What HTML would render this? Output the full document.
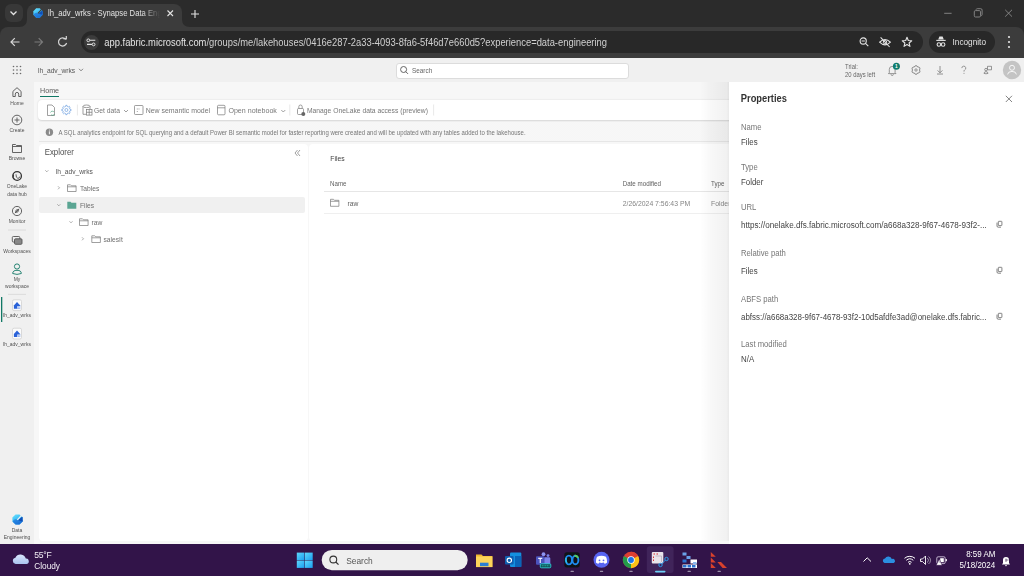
<!DOCTYPE html>
<html><head><meta charset="utf-8">
<style>
*{box-sizing:border-box;margin:0;padding:0}
html,body{width:1024px;height:576px;overflow:hidden;background:#fff;font-family:"Liberation Sans",sans-serif}
.a{position:absolute;white-space:nowrap}
.t{position:absolute;white-space:nowrap;line-height:10px;height:10px;transform:scaleY(1.1);transform-origin:0 55%}
svg{position:absolute;overflow:visible}
#strip{left:0;top:0;width:1024px;height:58px;background:#2b2b2b}
#tab{left:27px;top:4px;width:155px;height:24px;background:#3c3c3c;border-radius:8px 8px 0 0}
#toolbar{left:0;top:27px;width:1024px;height:31px;background:#3c3c3c;border-radius:8px 8px 0 0}
#omni{left:80.5px;top:31px;width:842px;height:22px;background:#282828;border-radius:11px}
#incog{left:929px;top:31px;width:66px;height:22px;background:#282828;border-radius:11px}
#hdr{left:0;top:58px;width:1024px;height:24px;background:#f0f0f0}
#rail{left:0;top:82px;width:34px;height:462px;background:#f0f0f0}
#main{left:34px;top:82px;width:990px;height:462px;background:#f7f7f7}
#taskbar{left:0;top:544px;width:1024px;height:32px;background:#321449}
.rl{font-size:5px;color:#505050;text-align:center;width:34px;left:0;line-height:7px;height:7px}
.card{position:absolute;background:#fff;border-radius:4px}
.tree{font-size:6.7px;color:#6e6e6e}
.plab{font-size:7.7px;color:#767676;left:741px}
.pval{font-size:7.9px;color:#444;left:741px}
</style></head><body>
<!-- browser chrome -->
<div class="a" id="strip"></div>
<div class="a" style="left:4.5px;top:4px;width:18px;height:18.2px;background:#383838;border-radius:6px"></div>
<svg style="left:0;top:0" width="30" height="27"><path d="M10.5 11.5 L13.5 14.5 L16.5 11.5" fill="none" stroke="#e3e3e3" stroke-width="1.3"/></svg>
<div class="a" id="toolbar"></div>
<div class="a" id="tab"></div>
<!-- tab flare -->
<svg style="left:182px;top:19px" width="8" height="8"><path d="M0 0 Q0 8 8 8 L0 8 Z" fill="#3c3c3c"/></svg><svg style="left:19px;top:19px" width="8" height="8"><path d="M8 0 Q8 8 0 8 L8 8 Z" fill="#3c3c3c"/></svg>
<!-- favicon -->
<svg style="left:32.7px;top:7.9px" width="10" height="10" viewBox="0 0 10 10"><defs><linearGradient id="fava" x1="0" y1="0" x2=".6" y2="1"><stop offset="0" stop-color="#6ee6ff"/><stop offset=".55" stop-color="#3cbcf5"/><stop offset="1" stop-color="#2b9de8"/></linearGradient><linearGradient id="favb" x1="0" y1="0" x2="1" y2="1"><stop offset="0" stop-color="#2a8fe6"/><stop offset="1" stop-color="#1768d2"/></linearGradient></defs><path d="M3.2 .35 L6.8 .35 L9.65 3.2 L9.65 6.8 L6.8 9.65 L3.2 9.65 L.35 6.8 L.35 3.2Z" fill="url(#fava)" transform="rotate(0 5 5)"/><path d="M.6 6.5 Q2.5 3.8 5 5.3 Q6.5 6.2 9.6 5.6 L9.65 6.8 L6.8 9.65 L3.2 9.65 L.9 7.3Z" fill="url(#favb)"/><path d="M5.4 5.5 L9.2 2.6 L9.65 3.2 L9.65 6.8 Q7.3 6.6 5.4 5.5Z" fill="#0f4fb8"/><path d="M4.9 5.3 L8.6 1.3" stroke="#3c3c3c" stroke-width="1.1"/></svg>
<div class="t" style="left:48px;top:9.4px;font-size:7.7px;color:#e3e3e3;width:112px;overflow:hidden;-webkit-mask-image:linear-gradient(90deg,#000 84%,transparent)">lh_adv_wrks - Synapse Data Engineering</div>
<svg style="left:0;top:0" width="220" height="27"><path d="M167.5 10.5 L173 16 M173 10.5 L167.5 16" stroke="#e3e3e3" stroke-width="1.1"/><path d="M195 10 V18 M191 14 H199" stroke="#e3e3e3" stroke-width="1.1"/></svg>
<!-- window controls -->
<svg style="left:930px;top:0" width="94" height="27"><path d="M14.2 13.3 H21.6" stroke="#8a8a8a" stroke-width=".9"/><rect x="44.3" y="10.6" width="6.2" height="6.4" rx="1.2" fill="none" stroke="#8a8a8a" stroke-width=".9"/><path d="M46 9.6 a1.4 1.4 0 0 1 1.3 -.9 H50.7 a1.4 1.4 0 0 1 1.4 1.4 V14.5 a1.4 1.4 0 0 1 -.9 1.3" fill="none" stroke="#8a8a8a" stroke-width=".9"/><path d="M75.2 9.8 L82 16.6 M82 9.8 L75.2 16.6" stroke="#8a8a8a" stroke-width=".9"/></svg>
<!-- nav -->
<svg style="left:0;top:27px" width="82" height="31"><path d="M19.5 15 H11 M14.8 11.2 L11 15 L14.8 18.8" fill="none" stroke="#d8d8d8" stroke-width="1.2"/><path d="M34.5 15 H42.5 M38.7 11.2 L42.5 15 L38.7 18.8" fill="none" stroke="#7a7a7a" stroke-width="1.2"/><path d="M65.8 12.3 A4.1 4.1 0 1 0 66.6 16" fill="none" stroke="#d8d8d8" stroke-width="1.2"/><path d="M63.3 11.6 L66.3 11.9 L66.3 8.9" fill="none" stroke="#d8d8d8" stroke-width="1.2"/></svg>
<div class="a" id="omni"></div>
<div class="a" style="left:83.5px;top:34.5px;width:15px;height:15px;border-radius:8px;background:#3c3c3c"></div><svg style="left:76px;top:28px" width="30" height="28"><circle cx="12.3" cy="12.3" r="1.4" fill="none" stroke="#e3e3e3" stroke-width="1"/><path d="M14 12.3 H19.3 M11 16.4 H16" stroke="#e3e3e3" stroke-width="1.1"/><circle cx="17.6" cy="16.4" r="1.4" fill="none" stroke="#e3e3e3" stroke-width="1"/></svg>
<div class="t" style="left:104.3px;top:37.7px;font-size:9.39px;color:#e3e3e3">app.fabric.microsoft.com<span style="color:#d0d0d0">/groups/me/lakehouses/0416e287-2a33-4093-8fa6-5f46d7e660d5?experience=data-engineering</span></div>
<svg style="left:850px;top:31px" width="70" height="22"><circle cx="13.2" cy="10" r="3.1" fill="none" stroke="#e3e3e3" stroke-width="1.1"/><path d="M15.5 12.3 L18.3 15.1 M11.6 10 H14.8" stroke="#e3e3e3" stroke-width="1.1"/><path d="M29.6 11.2 Q35 5.8 40.4 11.2 Q35 16.6 29.6 11.2Z" fill="none" stroke="#e3e3e3" stroke-width="1.1"/><circle cx="35" cy="11.2" r="1.7" fill="none" stroke="#e3e3e3" stroke-width="1"/><path d="M30.6 6.3 L39.6 16" stroke="#e3e3e3" stroke-width="1.1"/><path d="M57.00 6.30 L58.29 9.52 L61.76 9.75 L59.09 11.98 L59.94 15.35 L57.00 13.50 L54.06 15.35 L54.91 11.98 L52.24 9.75 L55.71 9.52Z" fill="none" stroke="#e3e3e3" stroke-width="1.1" stroke-linejoin="round"/></svg>
<div class="a" id="incog"></div>
<svg style="left:929px;top:31px" width="24" height="22"><path d="M9.2 8.6 L10.4 5.6 H13.6 L14.8 8.6Z" fill="#e3e3e3"/><path d="M7.3 9.4 H16.7" stroke="#e3e3e3" stroke-width="1.1"/><circle cx="9.9" cy="13.5" r="1.8" fill="none" stroke="#e3e3e3" stroke-width="1.1"/><circle cx="14.1" cy="13.5" r="1.8" fill="none" stroke="#e3e3e3" stroke-width="1.1"/><path d="M11.6 13.3 H12.4" stroke="#e3e3e3" stroke-width="1"/></svg>
<div class="t" style="left:952.5px;top:37.8px;font-size:8.25px;color:#e3e3e3">Incognito</div>
<svg style="left:1000px;top:31px" width="20" height="22"><circle cx="9" cy="6" r="1.1" fill="#e3e3e3"/><circle cx="9" cy="11" r="1.1" fill="#e3e3e3"/><circle cx="9" cy="16" r="1.1" fill="#e3e3e3"/></svg>

<!-- app header -->
<div class="a" id="hdr"></div>
<svg style="left:0;top:58px" width="34" height="24"><g fill="#6a6a6a"><circle cx="13.5" cy="8.5" r=".8"/><circle cx="17" cy="8.5" r=".8"/><circle cx="20.5" cy="8.5" r=".8"/><circle cx="13.5" cy="12" r=".8"/><circle cx="17" cy="12" r=".8"/><circle cx="20.5" cy="12" r=".8"/><circle cx="13.5" cy="15.5" r=".8"/><circle cx="17" cy="15.5" r=".8"/><circle cx="20.5" cy="15.5" r=".8"/></g></svg>
<div class="t" style="left:38px;top:65.8px;font-size:6.7px;color:#555">lh_adv_wrks</div>
<svg style="left:76px;top:58px" width="10" height="24"><path d="M3 10.8 L5 12.8 L7 10.8" fill="none" stroke="#666" stroke-width=".8"/></svg>
<div class="a" style="left:396px;top:62.5px;width:233px;height:16px;background:#fff;border:1px solid #dcdcdc;border-radius:3px"></div>
<svg style="left:396px;top:62px" width="20" height="17"><circle cx="7.6" cy="7.5" r="3" fill="none" stroke="#555" stroke-width=".9"/><path d="M9.8 9.7 L12 11.9" stroke="#555" stroke-width=".9"/></svg>
<div class="t" style="left:412px;top:65.5px;font-size:6.4px;color:#666">Search</div>
<div class="t" style="left:845px;top:64px;font-size:5.9px;color:#666;line-height:7.6px;height:16px">Trial:<br>20 days left</div>
<svg style="left:880px;top:58px" width="144" height="24">
<path d="M9.3 14.6 V11.3 a2.9 2.9 0 0 1 5.8 0 V14.6 L16 15.6 H8.4 Z M11 16.3 a1.2 1.2 0 0 0 2.4 0" fill="none" stroke="#777" stroke-width=".75" stroke-linejoin="round"/>
<circle cx="16.4" cy="8.2" r="3.5" fill="#107c6c"/><text x="16.4" y="9.9" font-size="4.8" fill="#fff" text-anchor="middle" font-family="Liberation Sans" font-weight="bold">1</text>
<path d="M36.00 7.60 L37.06 8.04 L37.70 9.06 L38.90 9.10 L39.81 9.80 L39.96 10.94 L39.40 12.00 L39.96 13.06 L39.81 14.20 L38.90 14.90 L37.70 14.94 L37.06 15.96 L36.00 16.40 L34.94 15.96 L34.30 14.94 L33.10 14.90 L32.19 14.20 L32.04 13.06 L32.60 12.00 L32.04 10.94 L32.19 9.80 L33.10 9.10 L34.30 9.06 L34.94 8.04Z" fill="none" stroke="#707070" stroke-width=".8" stroke-linejoin="round"/><circle cx="36" cy="12" r="1.2" fill="none" stroke="#707070" stroke-width=".7"/>
<path d="M60 8 V14.8 M57.6 12.4 L60 14.8 L62.4 12.4 M57 16 H63" fill="none" stroke="#777" stroke-width=".8"/>
<path d="M81.8 10.1 a2 2 0 1 1 2.8 1.9 C84 12.3 84 12.8 84 13.6" fill="none" stroke="#777" stroke-width=".75"/><circle cx="84" cy="15.3" r=".5" fill="#777"/>
<path d="M107.5 8.3 h4 v3.5 h-4z" fill="none" stroke="#777" stroke-width=".75"/><circle cx="106" cy="11.6" r="1.3" fill="none" stroke="#777" stroke-width=".75"/><path d="M104 15.4 q0 -1.6 2 -1.8 q2 .2 2 1.8 q-2 .8 -4 0z" fill="none" stroke="#777" stroke-width=".75"/>
<circle cx="132" cy="12" r="9.2" fill="#c4c4c4"/><circle cx="132" cy="9.8" r="2.5" fill="none" stroke="#fff" stroke-width=".85"/><path d="M127.6 16.4 Q128 13.4 132 13.4 Q136 13.4 136.4 16.4" fill="none" stroke="#fff" stroke-width=".85"/></svg>

<!-- left rail -->
<div class="a" id="rail"></div>
<div class="a" id="main"></div>
<svg style="left:0;top:82px" width="34" height="462">
<g fill="none" stroke="#555" stroke-width=".9">
<path d="M12.9 14.5 V9.4 L17 5.7 L21.1 9.4 V14.5 H18.7 V12.1 a1.7 1.7 0 0 0 -3.4 0 V14.5Z" stroke-linejoin="round"/>
<circle cx="17" cy="38" r="4.8"/><path d="M17 35.5 V40.5 M14.5 38 H19.5"/>
<path d="M12.5 62.5 h3 l1 1 h5 v7 h-9z M12.5 64.5 h9"/>
<circle cx="17.1" cy="94" r="4.3" stroke="#333" stroke-width="1.3"/><path d="M13.5 92.5 a4.3 4.3 0 0 0 1.5 5.3" stroke="#333" stroke-width="1"/><path d="M16 92.3 Q15.9 96 17.9 96.4 Q19.4 96.5 19.7 94.6" stroke="#444" stroke-width=".8"/>
<circle cx="17" cy="129" r="4.6"/><path d="M14.8 131.2 L19.2 126.8"/><path d="M15.5 130.5 Q15.2 127.2 18.7 127.3 Q18.8 130.8 15.5 130.5Z"/>
<rect x="12.3" y="154.5" width="7.5" height="5.5" rx="1" fill="#f0f0f0" stroke="#555" stroke-width=".9"/><rect x="14.5" y="156.8" width="7.5" height="5.5" rx="1" fill="#888" stroke="#555" stroke-width=".9"/>

</g>
<g fill="none" stroke="#117865" stroke-width=".9"><circle cx="17" cy="184.5" r="2.6"/><path d="M12.7 191.5 Q12.7 188.3 17 188.3 Q21.3 188.3 21.3 191.5 Q17 193.3 12.7 191.5Z"/></g>
<path d="M8 148 H26 M8 212.4 H26" stroke="#d6d6d6" stroke-width=".8"/>
<rect x="1" y="215" width="1.3" height="25" fill="#117865"/>
<rect x="12.5" y="217.8" width="9" height="10.8" rx="1.6" fill="#fbfbfb" stroke="#cdcdcd" stroke-width=".7"/><path d="M13.9 223.5 L17 220.0 L20.2 223.5 V226.70000000000002 H13.9Z" fill="#2a62d8"/><rect x="17.3" y="224.10000000000002" width="3" height="2.6" fill="#fff"/><path d="M17.8 224.9 h2 M17.8 226.10000000000002 h2" stroke="#3a72e0" stroke-width=".5"/>
<rect x="12.5" y="246.2" width="9" height="10.8" rx="1.6" fill="#fbfbfb" stroke="#cdcdcd" stroke-width=".7"/><path d="M13.9 251.89999999999998 L17 248.39999999999998 L20.2 251.89999999999998 V255.1 H13.9Z" fill="#2a62d8"/><rect x="17.3" y="252.5" width="3" height="2.6" fill="#fff"/><path d="M17.8 253.29999999999998 h2 M17.8 254.5 h2" stroke="#3a72e0" stroke-width=".5"/>

</svg>
<div class="t rl" style="top:99.9px">Home</div>
<div class="t rl" style="top:126.5px">Create</div>
<div class="t rl" style="top:155.4px">Browse</div>
<div class="t rl" style="top:182.9px">OneLake</div>
<div class="t rl" style="top:190.8px">data hub</div>
<div class="t rl" style="top:217.5px">Monitor</div>
<div class="t rl" style="top:247.5px">Workspaces</div>
<div class="t rl" style="top:275.5px">My</div>
<div class="t rl" style="top:282.5px">workspace</div>
<div class="t rl" style="top:311.5px">lh_adv_wrks</div>
<div class="t rl" style="top:340.6px">lh_adv_wrks</div>
<svg style="left:11.7px;top:513.8px" width="11" height="11" viewBox="0 0 10 10"><defs><linearGradient id="dea" x1="0" y1="0" x2=".6" y2="1"><stop offset="0" stop-color="#6ee6ff"/><stop offset=".55" stop-color="#3cbcf5"/><stop offset="1" stop-color="#2b9de8"/></linearGradient><linearGradient id="deb" x1="0" y1="0" x2="1" y2="1"><stop offset="0" stop-color="#2a8fe6"/><stop offset="1" stop-color="#1768d2"/></linearGradient></defs><path d="M3.2 .35 L6.8 .35 L9.65 3.2 L9.65 6.8 L6.8 9.65 L3.2 9.65 L.35 6.8 L.35 3.2Z" fill="url(#dea)" transform="rotate(0 5 5)"/><path d="M.6 6.5 Q2.5 3.8 5 5.3 Q6.5 6.2 9.6 5.6 L9.65 6.8 L6.8 9.65 L3.2 9.65 L.9 7.3Z" fill="url(#deb)"/><path d="M5.4 5.5 L9.2 2.6 L9.65 3.2 L9.65 6.8 Q7.3 6.6 5.4 5.5Z" fill="#0f4fb8"/><path d="M4.9 5.3 L8.6 1.3" stroke="#f0f0f0" stroke-width="1.1"/></svg>
<div class="t rl" style="top:526.5px">Data</div>
<div class="t rl" style="top:533.5px">Engineering</div>

<!-- ribbon -->
<div class="t" style="left:40px;top:85.5px;font-size:7.16px;color:#5a5a5a">Home</div>
<div class="a" style="left:40px;top:95.6px;width:19px;height:1.2px;background:#117865"></div>
<div class="card" style="left:38px;top:100px;width:720px;height:20px;box-shadow:0 .5px 2px rgba(0,0,0,.14)"></div>
<svg style="left:38px;top:100px" width="400" height="20">
<g fill="none" stroke="#777" stroke-width=".7"><path d="M9.5 5 h4.5 l2.5 2.5 v8 h-7z"/></g>
<path d="M12.5 12.5 a2 2 0 0 1 3.5 -.5 M16.5 14 a2 2 0 0 1 -3.5 .5" fill="none" stroke="#3c9c74" stroke-width=".6"/>
<path d="M31.91 9.21 L33.06 9.39 L33.06 10.61 L31.91 10.79 L31.44 11.93 L32.13 12.86 L31.26 13.73 L30.33 13.04 L29.19 13.51 L29.01 14.66 L27.79 14.66 L27.61 13.51 L26.47 13.04 L25.54 13.73 L24.67 12.86 L25.36 11.93 L24.89 10.79 L23.74 10.61 L23.74 9.39 L24.89 9.21 L25.36 8.07 L24.67 7.14 L25.54 6.27 L26.47 6.96 L27.61 6.49 L27.79 5.34 L29.01 5.34 L29.19 6.49 L30.33 6.96 L31.26 6.27 L32.13 7.14 L31.44 8.07Z" fill="none" stroke="#6a9de0" stroke-width=".7" stroke-linejoin="round"/><circle cx="28.4" cy="10" r="1.5" fill="none" stroke="#6a9de0" stroke-width=".7"/>
<path d="M39.4 4.5 V15.5" stroke="#e0e0e0" stroke-width=".7"/>
<g fill="none" stroke="#777" stroke-width=".7"><ellipse cx="48.5" cy="6.3" rx="3.5" ry="1.3"/><path d="M45 6.3 v8 h3 M52 6.3 v3"/><rect x="48.5" y="9.6" width="5.5" height="5.5"/><path d="M48.5 12.3 h5.5 M51.2 9.6 v5.5"/>
<path d="M86 10 l2 2 l2 -2"/>
<rect x="96.5" y="5.5" width="8.5" height="9" rx=".8"/><path d="M99.3 8.5 v1 M101 8.5 v1 M99.3 11 v1"/>
<rect x="179.5" y="5.3" width="7.5" height="9.5" rx="1"/><path d="M179.5 7.8 h7.5"/>
<path d="M243.3 10 l2 2 l2 -2"/>
<path d="M251.8 4.5 V15.5" stroke="#e0e0e0"/>
<rect x="259.5" y="8.5" width="6" height="6" rx="1"/><path d="M260.8 8.5 v-1.8 a1.7 1.7 0 0 1 3.4 0 v1.8"/>
<path d="M395.6 4.5 V15.5" stroke="#e0e0e0"/>
</g>
<circle cx="265.3" cy="14" r="2" fill="#666"/>
</svg>
<div class="t" style="left:94px;top:105.5px;font-size:6.78px;color:#777">Get data</div>
<div class="t" style="left:145.7px;top:105.5px;font-size:6.95px;color:#777">New semantic model</div>
<div class="t" style="left:228.4px;top:105.5px;font-size:7.1px;color:#777">Open notebook</div>
<div class="t" style="left:307px;top:105.5px;font-size:6.74px;color:#777">Manage OneLake data access (preview)</div>
<!-- info bar -->
<div class="a" style="left:38.5px;top:122.3px;width:700px;height:19.3px;background-color:#f9f9f9;background-image:radial-gradient(circle at 1px 1px,#f1f1f1 .5px,transparent .8px);background-size:2px 2px;border-bottom:1px solid #e6e6e6;border-radius:3px 3px 0 0"></div>
<svg style="left:38px;top:121px" width="20" height="20"><circle cx="11.4" cy="11.3" r="3.7" fill="#8a8a8a"/><path d="M11.4 10.3 v3" stroke="#fff" stroke-width=".9"/><circle cx="11.4" cy="9.1" r=".5" fill="#fff"/></svg>
<div class="t" style="left:58.4px;top:127.5px;font-size:6.01px;color:#767676">A SQL analytics endpoint for SQL querying and a default Power BI semantic model for faster reporting were created and will be updated with any tables added to the lakehouse.</div>

<!-- explorer card -->
<div class="card" style="left:38.5px;top:143.5px;width:269.5px;height:397.5px"></div>
<div class="t" style="left:44.7px;top:147.5px;font-size:7.84px;color:#505050">Explorer</div>
<svg style="left:290px;top:146px" width="14" height="14"><path d="M7.5 4 L5 7 L7.5 10 M10 4 L7.5 7 L10 10" fill="none" stroke="#777" stroke-width=".7"/></svg>
<div class="a" style="left:38.5px;top:197px;width:266px;height:16px;background:#f0f0f0;border-radius:2px"></div>
<svg style="left:38px;top:160px" width="80" height="90">
<g fill="none" stroke="#888" stroke-width=".7">
<path d="M7.3 10.3 l1.5 1.5 l1.5 -1.5"/>
<path d="M20 26.3 l1.5 1.5 l-1.5 1.5"/>
<path d="M19.3 44.3 l1.5 1.5 l1.5 -1.5"/>
<path d="M31.5 61.3 l1.5 1.5 l1.5 -1.5"/>
<path d="M44 77.3 l1.5 1.5 l-1.5 1.5"/>
</g>
<g fill="none" stroke="#777" stroke-width=".7">
<path d="M29.5 24.8 h3 l1 1 h4.6 v5.7 h-8.6z M29.5 26.8 h8.6"/>
<path d="M41.5 58.8 h3 l1 1 h4.6 v5.7 h-8.6z M41.5 60.8 h8.6"/>
<path d="M53.8 75.8 h3 l1 1 h4.6 v5.7 h-8.6z M53.8 77.8 h8.6"/>
</g>
<path d="M29.3 41.8 h3.2 l1 1 h4.8 v6 h-9z" fill="#5aa593"/>
</svg>
<div class="t tree" style="left:55.8px;top:167px;color:#555">lh_adv_wrks</div>
<div class="t tree" style="left:80px;top:183.6px">Tables</div>
<div class="t tree" style="left:80px;top:200.6px">Files</div>
<div class="t tree" style="left:91.5px;top:217.6px">raw</div>
<div class="t tree" style="left:103.5px;top:234.6px">salesIt</div>

<!-- files card -->
<div class="card" style="left:309px;top:143.5px;width:715px;height:397.5px"></div>
<div class="t" style="left:330.3px;top:153.8px;font-size:6.8px;color:#424242">Files</div>
<div class="t" style="left:330px;top:178.8px;font-size:6.2px;color:#616161">Name</div>
<div class="t" style="left:622.7px;top:178.8px;font-size:6.21px;color:#616161">Date modified</div>
<div class="t" style="left:711px;top:178.8px;font-size:6.2px;color:#616161">Type</div>
<div class="a" style="left:324px;top:191px;width:420px;height:.7px;background:#e6e6e6"></div>
<div class="a" style="left:324px;top:213px;width:420px;height:.7px;background:#efefef"></div>
<svg style="left:326px;top:195px" width="20" height="16"><path d="M4.5 4.3 h3 l1 1 h4.4 v6 h-8.4z M4.5 6.3 h8.4" fill="none" stroke="#777" stroke-width=".7"/></svg>
<div class="t" style="left:347.6px;top:199.3px;font-size:6.7px;color:#616161">raw</div>
<div class="t" style="left:622.7px;top:198.8px;font-size:6.87px;color:#858585">2/26/2024 7:56:43 PM</div>
<div class="t" style="left:711px;top:198.8px;font-size:6.87px;color:#858585">Folder</div>

<!-- properties panel -->
<div class="a" style="left:729px;top:82px;width:295px;height:462px;background:#fff;"></div><div class="a" style="left:700px;top:82px;width:29px;height:459px;background:linear-gradient(90deg,rgba(0,0,0,0) 0%,rgba(0,0,0,.025) 30%,rgba(0,0,0,.055) 92%,rgba(0,0,0,.085) 100%)"></div>
<div class="t" style="left:740.8px;top:94px;font-size:9.34px;font-weight:bold;color:#333">Properties</div>
<svg style="left:1000px;top:90px" width="18" height="18"><path d="M5.8 5.8 L12 12 M12 5.8 L5.8 12" stroke="#666" stroke-width=".8"/></svg>
<div class="t plab" style="top:122.5px">Name</div>
<div class="t pval" style="top:137.6px">Files</div>
<div class="t plab" style="top:162.5px">Type</div>
<div class="t pval" style="top:177.6px">Folder</div>
<div class="t plab" style="top:202.5px">URL</div>
<div class="t pval" style="top:220.6px;font-size:8.1px">https://onelake.dfs.fabric.microsoft.com/a668a328-9f67-4678-93f2-...</div>
<div class="t plab" style="top:248.5px">Relative path</div>
<div class="t pval" style="top:267.1px">Files</div>
<div class="t plab" style="top:295px">ABFS path</div>
<div class="t pval" style="top:312.6px;font-size:7.95px">abfss://a668a328-9f67-4678-93f2-10d5afdfe3ad@onelake.dfs.fabric...</div>
<div class="t plab" style="top:340.3px">Last modified</div>
<div class="t pval" style="top:355.4px">N/A</div>
<svg style="left:990px;top:215px" width="20" height="110"><rect x="8.3" y="6.3" width="3.6" height="4.3" rx=".5" fill="#fff" stroke="#666" stroke-width=".8"/><path d="M7 7.6 v3.4 a1.2 1.2 0 0 0 1.2 1.2 h2.8" fill="none" stroke="#666" stroke-width=".8"/><rect x="8.3" y="52.3" width="3.6" height="4.3" rx=".5" fill="#fff" stroke="#666" stroke-width=".8"/><path d="M7 53.6 v3.4 a1.2 1.2 0 0 0 1.2 1.2 h2.8" fill="none" stroke="#666" stroke-width=".8"/><rect x="8.3" y="98.3" width="3.6" height="4.3" rx=".5" fill="#fff" stroke="#666" stroke-width=".8"/><path d="M7 99.6 v3.4 a1.2 1.2 0 0 0 1.2 1.2 h2.8" fill="none" stroke="#666" stroke-width=".8"/></svg>

<!-- taskbar -->
<div class="a" id="taskbar"></div>
<svg style="left:0;top:544px" width="1024" height="32">
<defs>
<linearGradient id="cl" x1="0" y1="0" x2="0" y2="1"><stop offset="0" stop-color="#d8e6fb"/><stop offset="1" stop-color="#a9c4ef"/></linearGradient>
<linearGradient id="win" x1="0" y1="0" x2="1" y2="1"><stop offset="0" stop-color="#5fd8fb"/><stop offset="1" stop-color="#1a9ef0"/></linearGradient>
</defs>
<path d="M15.6 20 a3.2 3.2 0 0 1 -.2 -6.3 a5.6 5.6 0 0 1 10.4 .9 a2.7 2.7 0 0 1 .6 5.4z" fill="url(#cl)"/>
<g fill="url(#win)"><rect x="296.8" y="8.6" width="7.7" height="7.4"/><rect x="305" y="8.6" width="7.7" height="7.4"/><rect x="296.8" y="16.5" width="7.7" height="7.4"/><rect x="305" y="16.5" width="7.7" height="7.4"/></g>
<rect x="321.7" y="5.9" width="146" height="20.3" rx="10.15" fill="#efefef"/>
<circle cx="333.3" cy="15.5" r="3.4" fill="none" stroke="#333" stroke-width="1.1"/><path d="M335.8 18 L338.5 20.7" stroke="#333" stroke-width="1.2"/>
<!-- file explorer -->
<path d="M476 10.5 h5.5 l1.5 1.5 h9.4 v11 h-16.4z" fill="#f0b830"/><rect x="476" y="12.5" width="16.4" height="10.6" fill="#fcd45a"/><rect x="480" y="18.7" width="8.5" height="3.5" fill="#2a7fd4"/>
<!-- outlook -->
<rect x="510" y="8.5" width="11.3" height="14.5" rx="1" fill="#1490df"/><rect x="515" y="12" width="6.3" height="11" fill="#0a64b8"/><rect x="505" y="12" width="8.6" height="8.6" rx="1" fill="#0f5fb0"/><circle cx="509.3" cy="16.3" r="2.2" fill="none" stroke="#fff" stroke-width="1.1"/>
<!-- teams -->
<circle cx="543.5" cy="10.2" r="1.9" fill="#8e94f2"/><circle cx="548" cy="11.6" r="1.4" fill="#7b83eb"/><rect x="544" y="13.3" width="6.3" height="8" rx="1.2" fill="#7b83eb"/><rect x="536" y="12.3" width="8.5" height="8.5" rx="1" fill="#4b53bc"/><path d="M538.2 14.4 h4.1 M540.25 14.4 v4.6" stroke="#eef" stroke-width="1.2"/><rect x="540.3" y="19.8" width="10.5" height="4" rx="1" fill="#0d4d55" stroke="#2ee2e2" stroke-width=".8"/><path d="M541.7 21.8 h7.7" stroke="#2ec2a8" stroke-width=".9" stroke-dasharray="1.2 .5"/>
<!-- webex -->
<rect x="564.3" y="8.3" width="15.4" height="15.1" rx="2.6" fill="#101418"/><ellipse cx="568.9" cy="16" rx="3.1" ry="4.4" fill="none" stroke="#1f8cf0" stroke-width="1.9"/><ellipse cx="575.4" cy="16" rx="3" ry="4.3" fill="none" stroke="#1f8cf0" stroke-width="1.9"/><path d="M574.5 11.8 q2.5 -.5 3.6 2" fill="none" stroke="#5ad15a" stroke-width="1.9"/><path d="M566 14 q-.6 3 1 5" fill="none" stroke="#2fc8e8" stroke-width="1.2"/>
<rect x="570.5" y="26.8" width="3.4" height="1.3" rx=".6" fill="#9a90a8"/>
<!-- discord -->
<circle cx="601.5" cy="15.8" r="8" fill="#5865f2"/><path d="M597 12.8 q4.5 -2.2 9 0 q1.3 2.5 1.1 5.6 q-1.5 1.1 -2.6 1.3 l-.7 -1.1 q-2.3 .7 -4.6 0 l-.7 1.1 q-1.1 -.2 -2.6 -1.3 q-.2 -3.1 1.1 -5.6z" fill="#fff"/><circle cx="599.5" cy="16.3" r=".9" fill="#5865f2"/><circle cx="603.5" cy="16.3" r=".9" fill="#5865f2"/>
<rect x="599.8" y="26.8" width="3.4" height="1.3" rx=".6" fill="#9a90a8"/>
<!-- chrome -->
<circle cx="631" cy="16" r="8.2" fill="#dd3f32"/><path d="M631 16 L631 7.8 A8.2 8.2 0 0 1 638.1 11.9 Z" fill="#dd3f32"/><path d="M631 16 L638.1 11.9 A8.2 8.2 0 0 1 631 24.2 Z" fill="#fbc117"/><path d="M631 16 L631 24.2 A8.2 8.2 0 0 1 623.9 11.9Z" fill="#239c4a"/><circle cx="631" cy="16" r="3.7" fill="#fff"/><circle cx="631" cy="16" r="2.9" fill="#1a73e8"/>
<rect x="629.3" y="26.8" width="3.4" height="1.3" rx=".6" fill="#9a90a8"/>
<!-- snipping -->
<rect x="646.8" y="2.2" width="26.8" height="26.8" rx="3" fill="#40245a"/>
<rect x="651.8" y="8" width="11.5" height="11.5" rx="1" fill="#e9e4ea"/><path d="M653.5 10 h1.5 M656.5 10 h1.5 M653.5 12.5 v1.5 M653.5 15.5 v1.5" stroke="#d33" stroke-width="1"/><path d="M655.5 12 h6 v6" fill="none" stroke="#b8b0bf" stroke-width=".8"/><circle cx="660.5" cy="21" r="1.7" fill="none" stroke="#2b9ce8" stroke-width="1"/><circle cx="666.5" cy="15" r="1.7" fill="none" stroke="#2b9ce8" stroke-width="1"/><path d="M661.7 19.8 L665.3 16.2" stroke="#2b9ce8" stroke-width="1"/>
<rect x="655" y="26.8" width="10.5" height="1.6" rx=".8" fill="#6ccff6"/>
<!-- blue blocks -->
<rect x="682.5" y="8.5" width="4" height="3" fill="#6aa0e8"/><rect x="686.5" y="12" width="4" height="3" fill="#6aa0e8"/><rect x="682.5" y="15.5" width="4" height="3" fill="#2a73cf"/><rect x="690.5" y="15.5" width="6.5" height="4" fill="#fff"/><rect x="693" y="18" width="3.5" height="2.5" fill="#8ab8ee"/><rect x="682.5" y="20.5" width="14.5" height="3.5" fill="#fff"/><rect x="683" y="21" width="3.5" height="2.5" fill="#2a73cf"/><rect x="687.5" y="21" width="3.5" height="2.5" fill="#2a73cf"/><rect x="692" y="21" width="3.5" height="2.5" fill="#2a73cf"/>
<rect x="687.5" y="26.8" width="3.4" height="1.3" rx=".6" fill="#9a90a8"/>
<!-- red triangles -->
<path d="M710.8 8 L715.8 12.8 H710.8Z M710.8 13.5 L715.8 18.4 H710.8Z M710.8 18.9 L715.8 23.9 H710.8Z M717.4 18 H721 L727 23.9 H722.6Z" fill="#d8412c"/>
<rect x="717.5" y="26.8" width="3.4" height="1.3" rx=".6" fill="#9a90a8"/>
<!-- tray -->
<path d="M863.5 17.5 L867.2 13.8 L871 17.5" fill="none" stroke="#fff" stroke-width="1"/>
<path d="M884.5 19 a2.3 2.3 0 0 1 .5 -4.5 a3.7 3.7 0 0 1 6.8 .6 a2 2 0 0 1 2 3.9z" fill="#2b8fe0"/>
<g fill="none" stroke="#fff" stroke-width="1"><path d="M904.5 14.3 a8 8 0 0 1 10.5 0 M906.3 16.3 a5.3 5.3 0 0 1 7 0 M908 18.3 a2.7 2.7 0 0 1 3.6 0"/></g><circle cx="909.8" cy="19.8" r=".9" fill="#fff"/>
<path d="M920.5 15 h2 l3 -3 v8.5 l-3 -3 h-2z" fill="none" stroke="#fff" stroke-width=".9"/><path d="M927 14 a2.5 2.5 0 0 1 0 4.5 M928.5 12.5 a4.5 4.5 0 0 1 0 7.5" fill="none" stroke="#c8c0d0" stroke-width=".7"/>
<rect x="936.8" y="12.8" width="8.4" height="6.8" rx="1.3" fill="none" stroke="#cfc3da" stroke-width=".9"/><rect x="940.2" y="14.2" width="3.6" height="4" fill="#fff"/><rect x="945.6" y="15" width="1.3" height="2.2" rx=".5" fill="#fff"/><path d="M939.2 15 L942.2 21.3 H936.2Z" fill="#fff" stroke="#321449" stroke-width=".6"/><path d="M939.2 17 v2" stroke="#8a7a99" stroke-width=".6"/>
<path d="M1002 20.5 h8 l-1 -1.5 v-3 a3 3 0 0 0 -6 0 v3z M1005 21.2 a1 1 0 0 0 2 0" fill="#fff"/><path d="M1005.5 16 h3 M1006 14.5 v3.5" stroke="#2f1545" stroke-width=".6"/>
</svg>
<div class="t" style="left:34.2px;top:549.9px;font-size:8.6px;color:#f4f0f6;letter-spacing:-.2px">55°F</div>
<div class="t" style="left:34.2px;top:560.5px;font-size:8.3px;color:#f4f0f6">Cloudy</div>
<div class="t" style="left:346.2px;top:555.6px;font-size:8.4px;color:#555">Search</div>
<div class="t" style="left:965.5px;top:549.9px;font-size:8px;color:#fff;width:30px;text-align:right">8:59 AM</div>
<div class="t" style="left:955px;top:560.8px;font-size:8px;color:#fff;width:40.2px;text-align:right">5/18/2024</div>
</body></html>
